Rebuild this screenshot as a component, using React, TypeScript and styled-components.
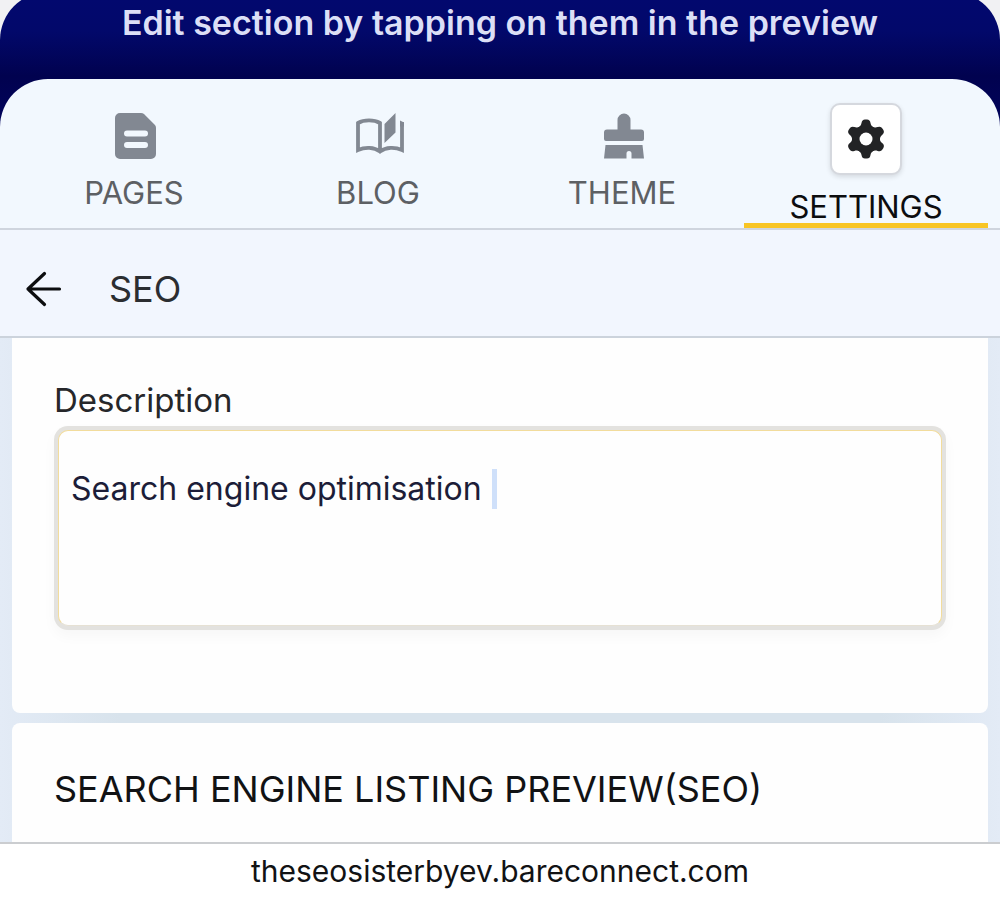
import React, { useState } from "react";
import styled, { createGlobalStyle } from "styled-components";

const GlobalStyle = createGlobalStyle`
  * { box-sizing: border-box; }
  body {
    margin: 0;
    background: #f1f1f3;
    font-family: Inter, "Liberation Sans", sans-serif;
    color: #111214;
  }
`;

const Screen = styled.div`
  height: 100vh;
  display: flex;
  flex-direction: column;
  overflow: hidden;
`;

const Banner = styled.header`
  flex: none;
  margin-top: -8px;
  border-radius: 48px 48px 0 0;
  background: linear-gradient(#02086f 0, #02086a 40px, #01024f 84px, #01045e 140px);
`;

const Hint = styled.p`
  margin: 0;
  height: 87px;
  padding-top: 11px;
  text-align: center;
  font-size: 34px;
  line-height: 40px;
  font-weight: 600;
  color: #dcdff6;
`;

const Tabs = styled.nav`
  height: 151px;
  padding: 0 12px;
  display: grid;
  grid-template-columns: repeat(4, 1fr);
  background: #f2f8fe;
  border-radius: 48px 48px 0 0;
  border-bottom: 2px solid #cfd5de;
`;

const Tab = styled.button<{ $active?: boolean }>`
  display: flex;
  flex-direction: column;
  align-items: center;
  justify-content: flex-start;
  gap: ${(p) => (p.$active ? 16 : 12)}px;
  padding: ${(p) => (p.$active ? 24 : 28)}px 0 0;
  border: 0;
  border-bottom: 5px solid ${(p) => (p.$active ? "#f8c524" : "transparent")};
  background: none;
  font: inherit;
  font-size: 31px;
  line-height: 32px;
  color: ${(p) => (p.$active ? "#0c0d0f" : "#5d6064")};
  cursor: pointer;
`;

const TabIcon = styled.span<{ $active?: boolean }>`
  display: flex;
  align-items: center;
  justify-content: center;
  width: 72px;
  height: ${(p) => (p.$active ? 72 : 58)}px;
  padding-left: ${(p) => (p.$active ? 0 : 4)}px;
  border-radius: 10px;
  border: ${(p) => (p.$active ? "2px solid #d5d8de" : "0")};
  background: ${(p) => (p.$active ? "#fff" : "none")};
  box-shadow: ${(p) => (p.$active ? "0 2px 5px rgba(0, 0, 0, 0.12)" : "none")};
  color: ${(p) => (p.$active ? "#222325" : "#828892")};
  svg { display: block; }
`;

const TitleBar = styled.div`
  flex: none;
  height: 108px;
  padding: 12px 24px 0;
  display: flex;
  align-items: center;
  gap: 45px;
  background: #f2f6fe;
  border-bottom: 2px solid #ccd3dc;
`;

const BackButton = styled.button`
  display: flex;
  padding: 0;
  border: 0;
  background: none;
  color: #0c0d0f;
  cursor: pointer;
`;

const Title = styled.h1`
  margin: 0;
  font-size: 36px;
  line-height: 44px;
  font-weight: 400;
  color: #2b2d31;
`;

const Body = styled.main`
  flex: 1;
  min-height: 0;
  overflow: hidden;
  padding: 0 12px;
  display: flex;
  flex-direction: column;
  gap: 10px;
  background: linear-gradient(90deg, #e3ebf6 0, #d8e3ec 120px, #d8e3ec calc(100% - 120px), #e3ebf6 100%);
`;

const Card = styled.section<{ $first?: boolean }>`
  flex: none;
  background: #fefefe;
  border-radius: ${(p) => (p.$first ? "0 0 8px 8px" : "8px 8px 0 0")};
  padding: 40px 42px ${(p) => (p.$first ? 83 : 40)}px;
`;

const Label = styled.label`
  display: block;
  font-size: 33px;
  line-height: 44px;
  color: #26272a;
`;

const Field = styled.div`
  position: relative;
  margin-top: 4px;
  height: 204px;
  padding: 4px;
  border-radius: 14px;
  background: #e3e2df;
  box-shadow: 0 6px 14px rgba(0, 0, 0, 0.03);
`;

const Area = styled.textarea`
  display: block;
  width: 100%;
  height: 100%;
  padding: 38px 12px;
  border: 1px solid #f2dc9c;
  border-bottom-color: #e6e1d4;
  border-radius: 10px;
  background: #fefefe;
  resize: none;
  outline: none;
  overflow: hidden;
  font: inherit;
  font-size: 32px;
  line-height: 40px;
  color: #1c1d38;
`;

const Caret = styled.span`
  position: absolute;
  left: 438px;
  top: 43px;
  width: 5px;
  height: 40px;
  background: #cfe0fa;
`;

const CardTitle = styled.h2`
  margin: 0;
  padding: 4px 0 16px;
  font-size: 36px;
  line-height: 44px;
  font-weight: 400;
`;

const AddressBar = styled.footer`
  flex: none;
  height: 57px;
  border-top: 2px solid #cbcdd0;
  background: #fff;
  text-align: center;
  font-size: 30px;
  line-height: 54px;
`;

const Address = styled.a`
  color: #111214;
  text-decoration: none;
`;

const PagesIcon = () => (
  <svg width="42" height="46" viewBox="0 0 42 46">
    <path fill="currentColor" d="M5 0h21a5 5 0 0 1 3 1l11 11a4 4 0 0 1 1 3v26a5 5 0 0 1-5 5H5a5 5 0 0 1-5-5V5a5 5 0 0 1 5-5z" />
    <path stroke="#f2f8fe" strokeWidth="6" strokeLinecap="round" d="M12 20.500h18M12 32h18" />
  </svg>
);

const BlogIcon = () => (
  <svg width="50" height="46" viewBox="0 0 50 46">
    <path
      fill="none"
      stroke="currentColor"
      strokeWidth="3.800"
      d="M25 38V10C19 6.500 9 6.500 3 10v27c7-3 16-3 22 1.500 6-4.500 15-4.500 22-1.500V9"
    />
    <path fill="currentColor" d="M45 7.500l4 2v4h-4zM29.500 11 40.500 0v19.500L29.500 30z" />
  </svg>
);

const ThemeIcon = () => (
  <svg width="40" height="46" viewBox="0 0 40 46" fill="currentColor">
    <path d="M13.500 7a6.500 6.500 0 0 1 13 0v9.500H37a3 3 0 0 1 3 3V26a2 2 0 0 1-2 2H2a2 2 0 0 1-2-2v-6.500a3 3 0 0 1 3-3h10.500z" />
    <path d="M1.500 32h37L40 45.500H27.500V40.500a2.500 2.500 0 0 0-5 0v5H0z" />
  </svg>
);

const SettingsIcon = () => (
  <svg width="40" height="40" viewBox="-20 -20 40 40">
    <g fill="currentColor">
      <circle r="13.500" />
      {[0, 60, 120, 180, 240, 300].map((a) => (
        <path
          key={a}
          transform={`rotate(${a})`}
          d="M-9-11C-6-12-4.800-14-4.500-16Q-4-19.500-1-19.500H1Q4-19.500 4.500-16C4.800-14 6-12 9-11L0-4z"
        />
      ))}
    </g>
    <circle r="6.500" fill="#fff" />
  </svg>
);

const BackIcon = () => (
  <svg width="40" height="40" viewBox="0 0 40 40" fill="none" stroke="currentColor" strokeWidth="3.200" strokeLinecap="round" strokeLinejoin="round">
    <path d="M35.500 20H4M20.500 4.500 4 20l16.500 15.500" />
  </svg>
);

const tabs = [
  { name: "PAGES", Icon: PagesIcon },
  { name: "BLOG", Icon: BlogIcon },
  { name: "THEME", Icon: ThemeIcon },
  { name: "SETTINGS", Icon: SettingsIcon, active: true },
];

export default function App() {
  const [description, setDescription] = useState("Search engine optimisation ");
  return (
    <Screen>
      <GlobalStyle />
      <Banner>
        <Hint>Edit section by tapping on them in the preview</Hint>
        <Tabs>
          {tabs.map(({ name, Icon, active }) => (
            <Tab key={name} type="button" $active={active}>
              <TabIcon $active={active}>
                <Icon />
              </TabIcon>
              {name}
            </Tab>
          ))}
        </Tabs>
      </Banner>
      <TitleBar>
        <BackButton type="button" aria-label="Back">
          <BackIcon />
        </BackButton>
        <Title>SEO</Title>
      </TitleBar>
      <Body>
        <Card $first>
          <Label htmlFor="description">Description</Label>
          <Field>
            <Area id="description" value={description} onChange={(e) => setDescription(e.target.value)} />
            <Caret />
          </Field>
        </Card>
        <Card>
          <CardTitle>SEARCH ENGINE LISTING PREVIEW(SEO)</CardTitle>
        </Card>
      </Body>
      <AddressBar>
        <Address href="#">theseosisterbyev.bareconnect.com</Address>
      </AddressBar>
    </Screen>
  );
}
